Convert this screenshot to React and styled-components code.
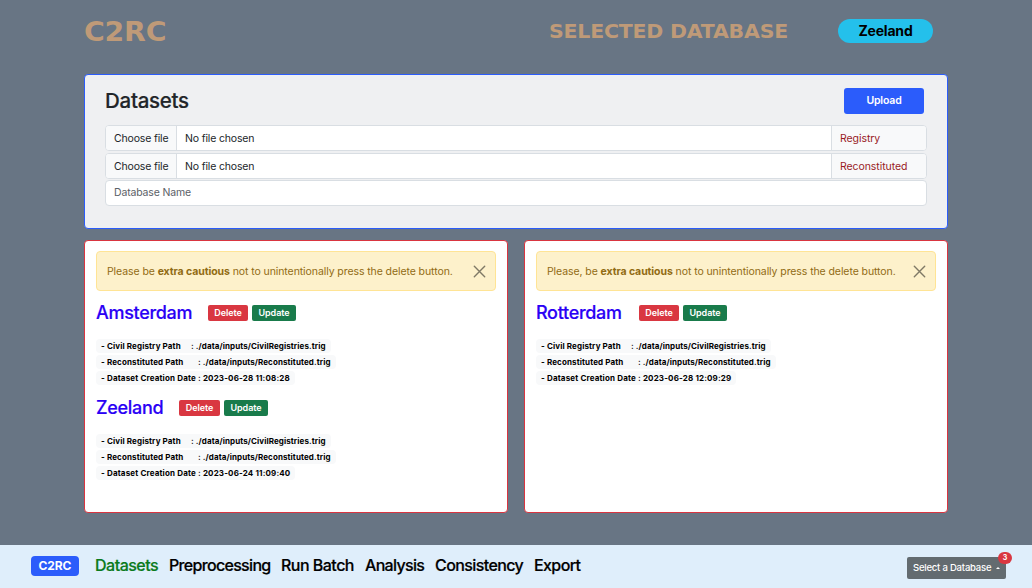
import React from "react";
import styled, { createGlobalStyle } from "styled-components";

const GlobalStyle = createGlobalStyle`
  *, *::before, *::after { box-sizing: border-box; }
  body {
    margin: 0;
    background: #687584;
    font-family: Inter, "Liberation Sans", sans-serif;
    overflow: hidden;
  }
`;

const Page = styled.div`
  display: flex;
  flex-direction: column;
  height: 588px;
`;

const Header = styled.header`
  display: flex;
  align-items: center;
  height: 62px;
  padding: 0 99px 0 84px;
`;

const Display = styled.span`
  font-family: "DejaVu Sans", sans-serif;
  font-weight: 700;
  color: #bf9a78;
  white-space: nowrap;
  line-height: 1;
  transform-origin: left center;
`;

const Brand = styled(Display)`
  flex: 1;
  font-size: 27px;
  letter-spacing: -0.2px;
  transform: scaleX(1.05);
`;

const SelectedTitle = styled(Display)`
  width: 240px;
  margin-right: 49px;
  font-size: 19px;
  letter-spacing: -0.2px;
  transform: scaleX(1.078);
`;

const Pill = styled.span`
  width: 95px;
  height: 24px;
  border-radius: 12px;
  background: #24c0eb;
  color: #000;
  font-size: 14px;
  font-weight: 700;
  letter-spacing: -0.2px;
  line-height: 24px;
  text-align: center;
`;

const Main = styled.main`
  flex: 1;
  padding: 12px 84px 0;
`;

const UploadCard = styled.section`
  height: 155px;
  padding: 13px 20px 0;
  border: 1px solid #2b5cfb;
  border-radius: 4px;
  background: #eff0f2;
`;

const CardHead = styled.div`
  display: flex;
  justify-content: space-between;
  height: 37px;
  padding-right: 3px;
`;

const CardTitle = styled.h1`
  margin: 0;
  color: #212529;
  font-size: 20.5px;
  font-weight: 500;
  letter-spacing: -0.28px;
  line-height: 26px;
  -webkit-text-stroke: 0.2px;
`;

const UploadButton = styled.button`
  width: 80px;
  height: 26px;
  padding: 0;
  border: 0;
  border-radius: 3px;
  background: #2b5cfb;
  color: #fff;
  font: 600 10.5px/26px Inter, sans-serif;
  letter-spacing: -0.15px;
`;

const Field = styled.div`
  display: flex;
  height: 26px;
  margin-bottom: ${(p) => p.$gap}px;
  border: 1px solid #d9dee3;
  border-radius: 4px;
  background: #fff;
  color: #212529;
  font-size: 10.5px;
  letter-spacing: -0.16px;
  line-height: 25px;
  overflow: hidden;
`;

const Choose = styled.span`
  width: 71px;
  padding-left: 8px;
  border-right: 1px solid #d9dee3;
  background: #f8f9fa;
`;

const FileName = styled.span`
  flex: 1;
  padding-left: 8px;
`;

const FieldTag = styled.span`
  width: 95px;
  padding-left: 8px;
  border-left: 1px solid #d9dee3;
  background: #f8f9fa;
  color: #991b1f;
  letter-spacing: -0.07px;
`;

const Placeholder = styled.span`
  padding-left: 8px;
  color: #5b6167;
  line-height: 23px;
`;

const Columns = styled.div`
  display: grid;
  grid-template-columns: 424px 424px;
  gap: 16px;
  margin-top: 11px;
`;

const ListCard = styled.section`
  height: 273px;
  padding: 10px 11px;
  border: 1px solid #d93540;
  border-radius: 4px;
  background: #fff;
`;

const Alert = styled.div`
  display: flex;
  align-items: center;
  justify-content: space-between;
  height: 40px;
  padding: 0 9px 0 10px;
  border: 1px solid #ffe495;
  border-radius: 4px;
  background: #fdf1cb;
  color: #916b13;
  font-size: 10.5px;
  letter-spacing: -0.085px;
  white-space: nowrap;
`;

const Dataset = styled.article`
  height: 95px;
  padding-top: 9px;
`;

const DatasetHead = styled.div`
  display: flex;
  align-items: center;
  gap: 4px;
  height: 26px;
  margin-bottom: 13px;
`;

const DatasetName = styled.h2`
  width: ${(p) => p.$width}px;
  margin: 0;
  color: #2a00f5;
  font-size: 18px;
  font-weight: 500;
  letter-spacing: -0.3px;
  line-height: 26px;
  -webkit-text-stroke: 0.2px;
`;

const SmallButton = styled.button`
  width: ${(p) => p.$width}px;
  height: 16px;
  padding: 0;
  border: 0;
  border-radius: 2px;
  background: ${(p) => (p.$danger ? "#d93741" : "#197b4b")};
  color: #fff;
  font: 600 9px/16px Inter, sans-serif;
  letter-spacing: -0.1px;
`;

const Info = styled.div`
  width: max-content;
  height: 14px;
  margin-bottom: 2px;
  padding: 0 5px;
  border-radius: 4px;
  background: #f8f9fa;
  color: #000;
  font-size: 8px;
  font-weight: 700;
  letter-spacing: ${(p) => p.$spacing || 0.1}px;
  line-height: 14px;
  white-space: pre;
`;

const InfoLabel = styled.span`
  display: inline-block;
  width: ${(p) => p.$width}px;
  letter-spacing: 0.13px;
`;

const NavBar = styled.nav`
  display: flex;
  align-items: center;
  height: 43px;
  padding: 0 26px 2px 31px;
  background: #dfeefb;
`;

const NavBadge = styled.span`
  width: 48px;
  height: 20px;
  margin-right: 16px;
  border-radius: 4px;
  background: #2b5cfb;
  color: #fff;
  font-size: 12px;
  font-weight: 700;
  letter-spacing: -0.1px;
  line-height: 20px;
  text-align: center;
`;

const NavItem = styled.a`
  width: ${(p) => p.$width}px;
  padding-bottom: 2px;
  color: ${(p) => (p.$active ? "#0a7a1c" : "#000")};
  font-size: 16px;
  font-weight: 500;
  letter-spacing: ${(p) => p.$spacing}px;
  white-space: nowrap;
  -webkit-text-stroke: 0.2px;
`;

const Picker = styled.button`
  position: relative;
  display: flex;
  align-items: center;
  width: 99px;
  height: 22px;
  margin: 5px 0 0 auto;
  padding: 0 6px;
  border: 0;
  border-radius: 2px;
  background: #636b70;
  color: #fff;
  font: 500 9.5px/22px Inter, sans-serif;
  letter-spacing: -0.21px;
  white-space: nowrap;
`;

const Caret = styled.span`
  margin-left: 5px;
  border: 2px solid transparent;
  border-top: 0;
  border-bottom: 2px solid #fff;
`;

const Count = styled.span`
  position: absolute;
  top: -5px;
  right: -6px;
  width: 14px;
  height: 12px;
  border-radius: 6px;
  background: #d93741;
  font-size: 7px;
  font-weight: 700;
  line-height: 12px;
  text-align: center;
`;

const CloseSvg = styled.svg`
  flex: none;
  width: 13px;
  height: 13px;
`;

function CloseIcon() {
  return (
    <CloseSvg viewBox="0 0 13 13" stroke="#7f7966" strokeWidth="1.4" strokeLinecap="round">
      <path d="M1.3 1.3 11.7 11.7M11.7 1.3 1.3 11.7" />
    </CloseSvg>
  );
}

function Warning({ lead }) {
  return (
    <Alert>
      <span>
        {lead} <b>extra cautious</b> not to unintentionally press the delete button.
      </span>
      <CloseIcon />
    </Alert>
  );
}

function DatasetEntry({ name, width, deleteWidth = 40, date }) {
  return (
    <Dataset>
      <DatasetHead>
        <DatasetName $width={width}>{name}</DatasetName>
        <SmallButton $danger $width={deleteWidth}>Delete</SmallButton>
        <SmallButton $width={44}>Update</SmallButton>
      </DatasetHead>
      <Info><InfoLabel $width={90}>- Civil Registry Path</InfoLabel>: ./data/inputs/CivilRegistries.trig</Info>
      <Info><InfoLabel $width={97}>- Reconstituted Path</InfoLabel>: ./data/inputs/Reconstituted.trig</Info>
      <Info $spacing={0.165}>- Dataset Creation Date : {date}</Info>
    </Dataset>
  );
}

const navItems = [
  ["Datasets", 74, -0.5],
  ["Preprocessing", 112, -0.68],
  ["Run Batch", 84, -0.52],
  ["Analysis", 70, -0.68],
  ["Consistency", 99, -0.6],
  ["Export", 50, -0.6],
];

export default function App() {
  return (
    <Page>
      <GlobalStyle />
      <Header>
        <Brand>C2RC</Brand>
        <SelectedTitle>SELECTED DATABASE</SelectedTitle>
        <Pill>Zeeland</Pill>
      </Header>
      <Main>
        <UploadCard>
          <CardHead>
            <CardTitle>Datasets</CardTitle>
            <UploadButton>Upload</UploadButton>
          </CardHead>
          <Field $gap={2}>
            <Choose>Choose file</Choose>
            <FileName>No file chosen</FileName>
            <FieldTag>Registry</FieldTag>
          </Field>
          <Field $gap={1}>
            <Choose>Choose file</Choose>
            <FileName>No file chosen</FileName>
            <FieldTag>Reconstituted</FieldTag>
          </Field>
          <Field $gap={0}>
            <Placeholder>Database Name</Placeholder>
          </Field>
        </UploadCard>
        <Columns>
          <ListCard>
            <Warning lead="Please be" />
            <DatasetEntry name="Amsterdam" width={108} date="2023-06-28 11:08:28" />
            <DatasetEntry name="Zeeland" width={79} deleteWidth={41} date="2023-06-24 11:09:40" />
          </ListCard>
          <ListCard>
            <Warning lead="Please, be" />
            <DatasetEntry name="Rotterdam" width={99} date="2023-06-28 12:09:29" />
          </ListCard>
        </Columns>
      </Main>
      <NavBar>
        <NavBadge>C2RC</NavBadge>
        {navItems.map(([label, width, spacing], i) => (
          <NavItem key={label} $width={width} $spacing={spacing} $active={i === 0}>{label}</NavItem>
        ))}
        <Picker>
          Select a Database
          <Caret />
          <Count>3</Count>
        </Picker>
      </NavBar>
    </Page>
  );
}
